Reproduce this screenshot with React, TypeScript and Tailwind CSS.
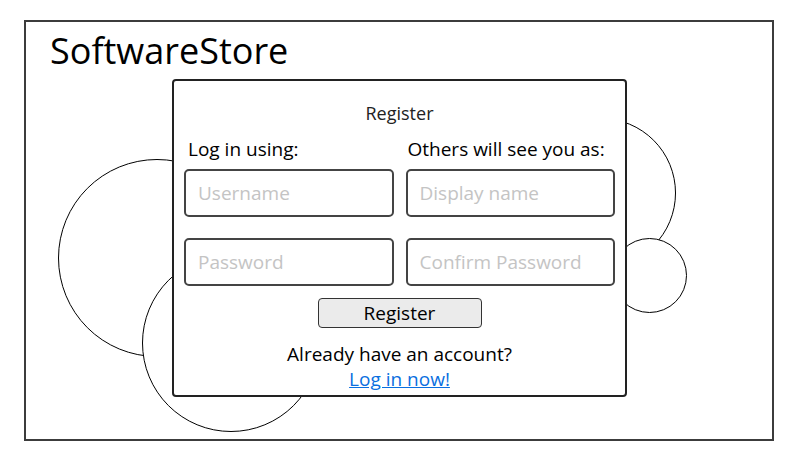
import React from 'react';

const font = { fontFamily: '"Open Sans", "Noto Sans", sans-serif' };

const Field: React.FC<{ placeholder: string; type?: string }> = ({ placeholder, type = 'text' }) => (
  <input
    type={type}
    placeholder={placeholder}
    className="h-[48px] w-full rounded-[5px] border-2 border-[#444] bg-white px-[12px] text-[19px] text-black placeholder:text-[#c4c4c4] outline-none"
  />
);

const App: React.FC = () => {
  return (
    <div className="min-h-[458px] w-[794px] bg-white pt-[20px] pl-[24px]" style={font}>
      <div className="relative h-[421px] w-[750px] border-2 border-[#3c3c3c]">
        {/* background circles */}
        <div className="absolute left-[32px] top-[137px] h-[198px] w-[198px] rounded-full border-[1.75px] border-black bg-white" />
        <div className="absolute left-[116px] top-[232px] h-[178px] w-[178px] rounded-full border-[1.75px] border-black bg-white" />
        <div className="absolute left-[500px] top-[96px] h-[150px] w-[150px] rounded-full border-[1.75px] border-black bg-white" />
        <div className="absolute left-[586px] top-[216px] h-[75px] w-[75px] rounded-full border-[1.75px] border-black bg-white" />

        <h1 className="relative h-[57px] pl-[24px] pt-[7px] text-[36px] leading-[44px] text-black">SoftwareStore</h1>

        <div className="relative ml-[146px] flex h-[318px] w-[455px] flex-col rounded-[4px] border-2 border-[#222] bg-white px-[10px]">
          <h2 className="mt-[20px] text-center text-[18px] leading-[24px] text-[#222]">Register</h2>

          <div className="mt-[11px] grid grid-cols-2 gap-x-[12px]">
            <p className="pl-[4px] text-[19px] leading-[26px] text-black">Log in using:</p>
            <p className="pl-[2px] text-[19px] leading-[26px] text-black">Others will see you as:</p>
          </div>

          <div className="mt-[7px] grid grid-cols-2 gap-x-[12px] gap-y-[21px]">
            <Field placeholder="Username" />
            <Field placeholder="Display name" />
            <Field placeholder="Password" type="password" />
            <Field placeholder="Confirm Password" type="password" />
          </div>

          <button className="mx-auto mt-[12px] h-[30px] w-[164px] rounded-[4px] border-[1.5px] border-[#333] bg-[#ebebeb] text-[19px] leading-[26px] text-black">
            Register
          </button>

          <p className="mt-[14px] text-center text-[19px] leading-[25px] text-black">Already have an account?</p>
          <a href="#" className="mx-auto text-[19px] leading-[25px] text-[#0a6fe0] underline">
            Log in now!
          </a>
        </div>
      </div>
    </div>
  );
};

export default App;
